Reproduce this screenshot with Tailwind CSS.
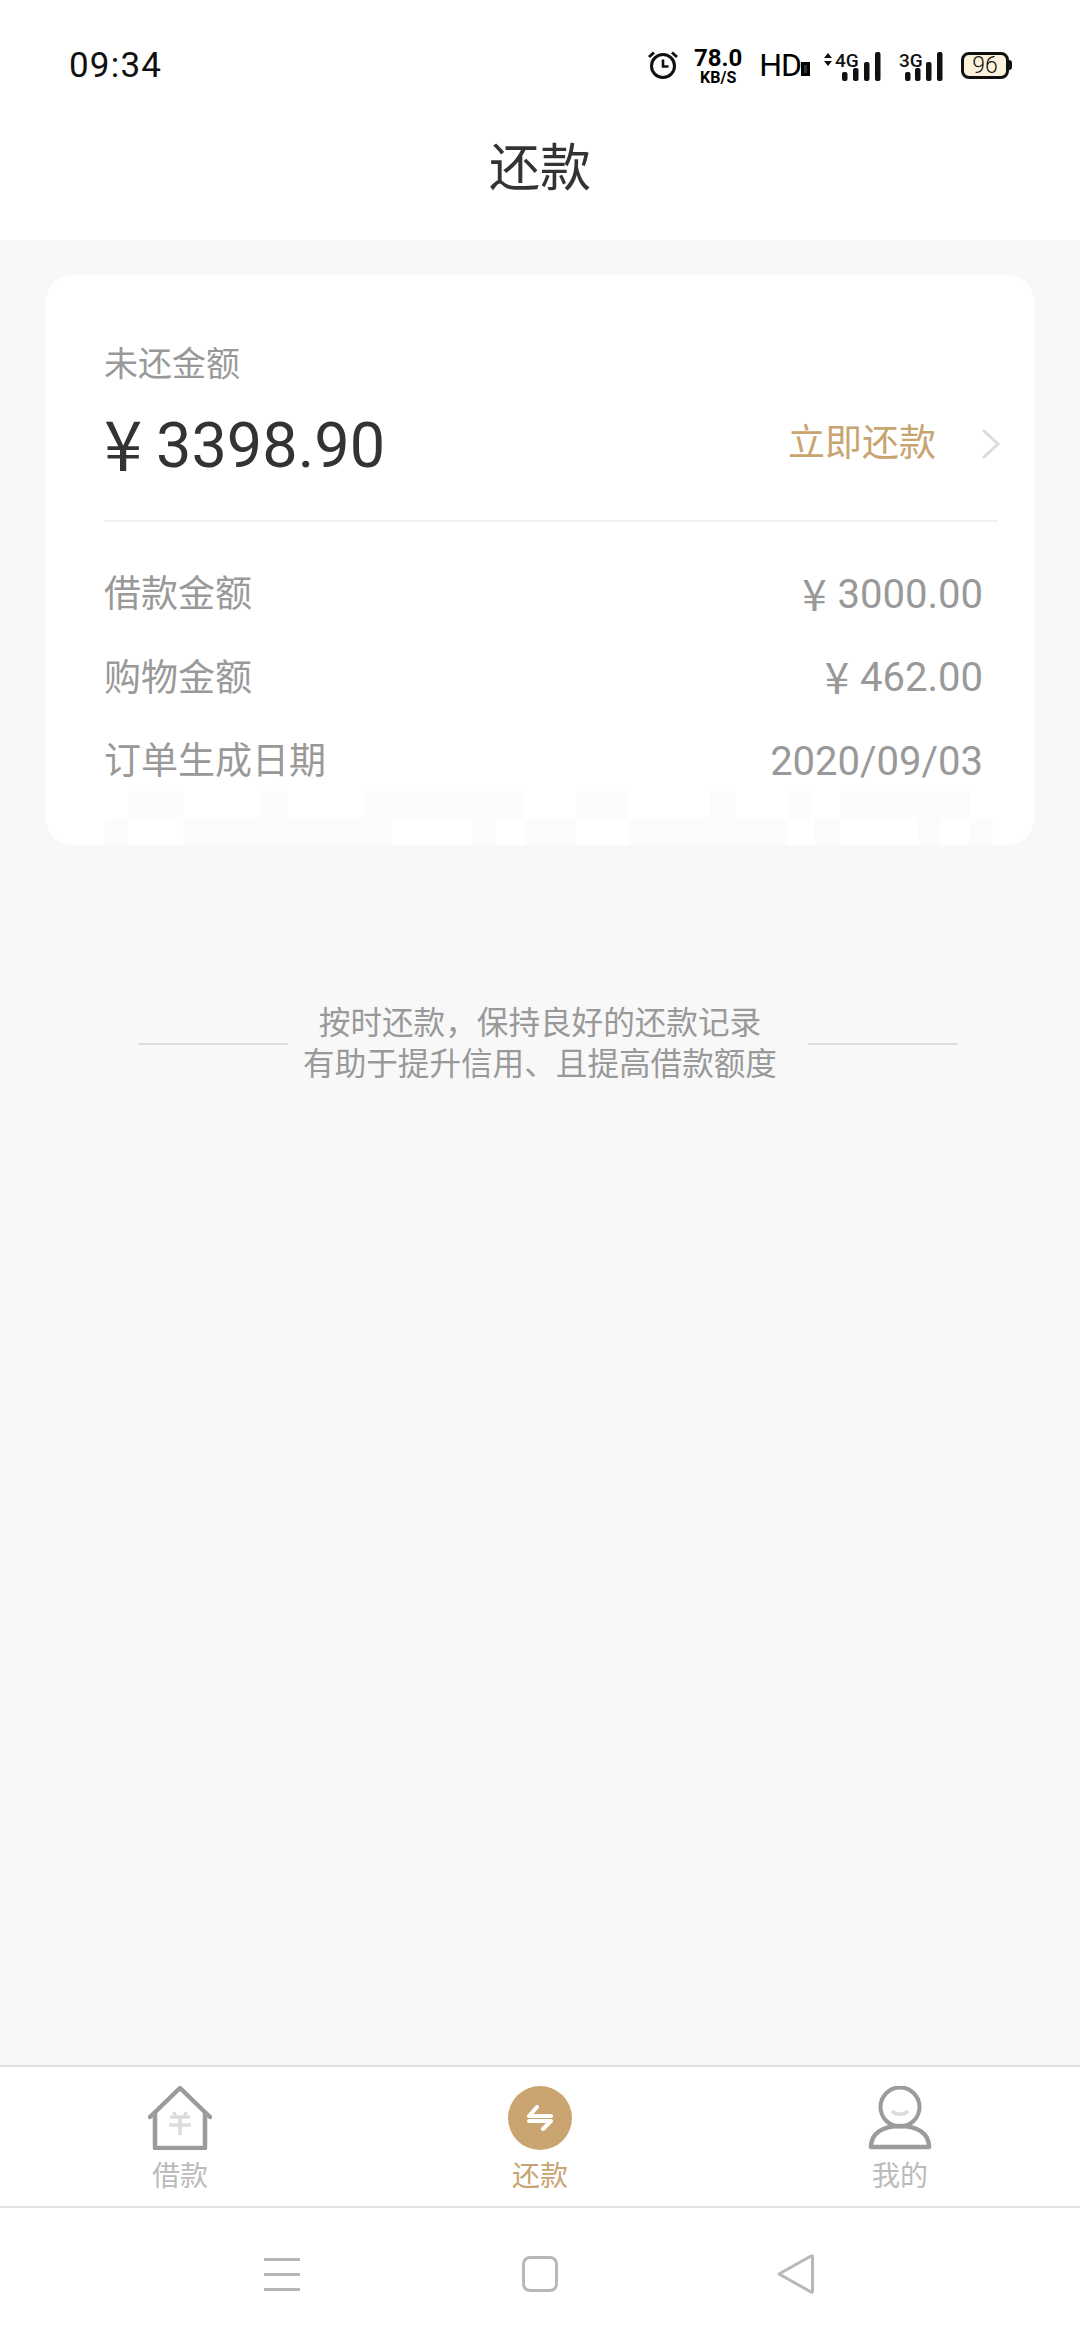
<!doctype html>
<html>
<head>
  <meta charset="UTF-8">
  <meta name="viewport" content="width=device-width, initial-scale=1.0">
  <script src="https://cdn.jsdelivr.net/npm/@tailwindcss/browser@4"></script>
</head>
<body class="font-['Roboto','Noto_Sans_CJK_SC',sans-serif]">
  <div class="w-[1080px] h-[2340px] flex flex-col bg-[#f8f8f8] overflow-hidden">

    <!-- Status bar + title -->
    <header class="h-[240px] shrink-0 bg-white flex flex-col">
      <div class="h-[130px] shrink-0">
        <div class="flex items-center h-[26px] mt-[52px] pl-[69px] pr-[68px] justify-between">
          <span class="text-[35px] leading-none text-[#111] tracking-[1.200px]">09:34</span>
          <div class="flex items-center h-[30px]">
            <svg class="w-[32px] h-[30px]" viewBox="0 0 32 30" fill="none" stroke="#111" stroke-width="3">
              <circle cx="16" cy="16" r="11.5"/>
              <path d="M16 9.500v7h5.500" stroke-width="2.600"/>
              <path d="M2 7l5-4.500M30 7l-5-4.500" stroke-width="3"/>
            </svg>
            <div class="w-[50px] ml-[14px] mt-[4px] flex flex-col items-center font-bold text-black">
              <span class="text-[24px] leading-[20px]">78.0</span>
              <span class="text-[16px] leading-[19px]">KB/S</span>
            </div>
            <div class="ml-[16px] flex items-end text-[32px] leading-[30px] text-black">
              <span class="tracking-[-1px]">HD</span>
              <span class="w-[9px] h-[14px] border-[3px] border-black bg-black/80 mb-[4px]"></span>
            </div>
            <svg class="w-[58px] h-[32px] ml-[14px]" viewBox="0 0 58 32" fill="#111">
              <path d="M0 9l4-5 4 5zM0 12l4 5 4-5z"/>
              <text x="11" y="18" font-size="19" font-weight="500" font-family="Roboto">4G</text>
              <rect x="18" y="23" width="5.500" height="9" rx="2"/>
              <rect x="29" y="19" width="5.500" height="13" rx="2"/>
              <rect x="40" y="13" width="5.500" height="19" rx="2"/>
              <rect x="51" y="3" width="5.500" height="29" rx="2"/>
            </svg>
            <svg class="w-[46px] h-[32px] ml-[17px]" viewBox="0 0 46 32" fill="#111">
              <text x="0" y="18" font-size="19" font-weight="500" font-family="Roboto">3G</text>
              <rect x="6" y="23" width="5.500" height="9" rx="2"/>
              <rect x="16" y="19" width="5.500" height="13" rx="2"/>
              <rect x="27" y="13" width="5.500" height="19" rx="2"/>
              <rect x="38" y="3" width="5.500" height="29" rx="2"/>
            </svg>
            <div class="ml-[16px] flex items-center">
              <div class="w-[48px] h-[27px] rounded-[8px] border-[3px] border-[#111] bg-[#fdf3dc] flex items-center justify-center text-[23px] font-light text-[#111] leading-none">96</div>
              <div class="w-[3px] h-[10px] bg-[#111] rounded-r-sm"></div>
            </div>
          </div>
        </div>
      </div>
      <h1 class="text-[51px] leading-[74px] mt-[2px] text-[#333] text-center">还款</h1>
    </header>

    <main class="flex-1 px-[46px] pt-[35px]">
      <!-- Card -->
      <section class="relative h-[570px] w-[988px] bg-white rounded-[26px] pt-[68px] overflow-hidden">
        <div class="pl-[58px] text-[34px] leading-[42px] text-[#999]">未还金额</div>
        <div class="flex items-center h-[72px] mt-[24px] pl-[58px]">
          <span class="text-[64px] leading-none text-[#333] flex items-center"><span class="w-[52px] text-[69px] mt-[-8px] font-['Noto_Sans_CJK_SC']">¥</span><span class="text-[63px]">3398.90</span></span>
          <span class="ml-auto text-[37px] leading-none text-[#c8a471] mb-[4px]">立即还款</span>
          <svg class="w-[20px] h-[32px] ml-[45px] mr-[33px] mb-[2px]" viewBox="0 0 20 32" fill="none" stroke="#dcdcdc" stroke-width="3"><path d="M2 2l15 14L2 30"/></svg>
        </div>
        <div class="ml-[58px] mt-[39px] mr-[36px] h-[2px] bg-[#f0f0f0]"></div>
        <div class="flex flex-col pl-[58px] pr-[51px] mt-[31px] text-[#999]">
          <div class="flex items-center justify-between h-[83.500px]"><span class="text-[37px]">借款金额</span><span class="text-[40px] leading-none flex items-center"><span class="text-[44px] mr-[11px] mt-[-6px] font-['Noto_Sans_CJK_SC']">¥</span>3000.00</span></div>
          <div class="flex items-center justify-between h-[83.500px]"><span class="text-[37px]">购物金额</span><span class="text-[40px] leading-none flex items-center"><span class="text-[44px] mr-[11px] mt-[-6px] font-['Noto_Sans_CJK_SC']">¥</span>462.00</span></div>
          <div class="flex items-center justify-between h-[83.500px]"><span class="text-[37px]">订单生成日期</span><span class="text-[40px] leading-none">2020/09/03</span></div>
        </div>
        <!-- faint mosaic left at the bottom of the card -->
        <div class="absolute left-[59px] bottom-0 flex flex-col">
          <div class="flex h-[27px] ml-[23px]">
            <div class="w-[55px] bg-[#fcfcfc]"></div>
            <div class="w-[26px] ml-[78px] bg-[#fcfcfc]"></div>
            <div class="w-[159px] ml-[78px] bg-[#fcfcfc]"></div>
            <div class="w-[53px] ml-[52px] bg-[#fcfcfc]"></div>
            <div class="w-[26px] ml-[81px] bg-[#fcfcfc]"></div>
            <div class="w-[23px] ml-[52px] bg-[#fcfcfc]"></div>
            <div class="w-[130px] ml-[29px] bg-[#fcfcfc]"></div>
          </div>
          <div class="flex h-[27px]">
            <div class="w-[23px] bg-[#fcfcfc]"></div>
            <div class="w-[208px] ml-[55px] bg-[#fcfcfc]"></div>
            <div class="w-[23px] ml-[81px] bg-[#fcfcfc]"></div>
            <div class="w-[52px] ml-[29px] bg-[#fcfcfc]"></div>
            <div class="w-[159px] ml-[53px] bg-[#fcfcfc]"></div>
            <div class="w-[26px] ml-[26px] bg-[#fcfcfc]"></div>
            <div class="w-[23px] ml-[78px] bg-[#fcfcfc]"></div>
            <div class="w-[23px] ml-[29px] bg-[#fcfcfc]"></div>
          </div>
        </div>
      </section>

      <!-- Hint -->
      <div class="flex items-center mt-[158px] ml-[92px] w-[820px]">
        <div class="w-[150px] h-[2px] bg-[#dedede]"></div>
        <p class="w-[520px] pr-[16px] text-center text-[31.600px] leading-[41px] text-[#999]">按时还款，保持良好的还款记录<br>有助于提升信用、且提高借款额度</p>
        <div class="w-[150px] h-[2px] bg-[#dedede]"></div>
      </div>
    </main>

    <!-- Tab bar -->
    <nav class="h-[143px] shrink-0 bg-white border-t-2 border-b-2 border-[#e2e2e2] box-border grid grid-cols-3 pt-[19px]">
      <div class="flex flex-col items-center">
        <svg class="w-[64px] h-[64px]" viewBox="0 0 64 64" fill="none">
          <path d="M2 31L32 2l30 29" stroke="#9b9b9b" stroke-width="4.500" stroke-linecap="round" stroke-linejoin="round"/>
          <path d="M7 27v35h50V27" stroke="#9b9b9b" stroke-width="4.500" stroke-linejoin="round"/>
          <path d="M26 26l1.500 5M38 26l-1.500 5M22 31h20M21 39h22M32 31v18" stroke="#dcdcdc" stroke-width="3.500"/>
        </svg>
        <span class="text-[28px] leading-[40px] mt-[7px] text-[#bbb]">借款</span>
      </div>
      <div class="flex flex-col items-center">
        <div class="w-[64px] h-[64px] rounded-full bg-[#cba571] flex items-center justify-center">
          <svg class="w-[26px] h-[26px]" viewBox="0 0 26 26" fill="none" stroke="#fff" stroke-width="4" stroke-linecap="round" stroke-linejoin="round">
            <path d="M2 11h22M2 11l8-9M24 16H2M24 16l-8 8"/>
          </svg>
        </div>
        <span class="text-[28px] leading-[40px] mt-[7px] text-[#c8a471]">还款</span>
      </div>
      <div class="flex flex-col items-center">
        <svg class="w-[64px] h-[64px]" viewBox="0 0 64 64" fill="none">
          <circle cx="32" cy="21" r="19.500" stroke="#9b9b9b" stroke-width="4"/>
          <path d="M3 61c0-14 12-21 29-21s29 7 29 21z" stroke="#9b9b9b" stroke-width="4.500" stroke-linejoin="round"/>
          <path d="M25 26c4 3 10 3 14 0" stroke="#dcdcdc" stroke-width="3.500" stroke-linecap="round"/>
        </svg>
        <span class="text-[28px] leading-[40px] mt-[7px] text-[#bbb]">我的</span>
      </div>
    </nav>

    <!-- System nav -->
    <div class="h-[132px] shrink-0 bg-white grid grid-cols-3 items-center">
      <div class="flex">
        <div class="w-[36px] flex flex-col gap-[12px] ml-[264px]">
          <div class="h-[3px] bg-[#b5b5b5]"></div>
          <div class="h-[3px] bg-[#b5b5b5]"></div>
          <div class="h-[3px] bg-[#b5b5b5]"></div>
        </div>
      </div>
      <div class="flex justify-center">
        <div class="w-[36px] h-[36px] rounded-[8px] border-[3px] border-[#b8b8b8]"></div>
      </div>
      <div class="flex">
        <svg class="w-[40px] h-[42px] ml-[56px]" viewBox="0 0 40 42" fill="none">
          <path d="M3 21L35 3q1.500-1 1.500 1v34q0 2-1.500 1z" stroke="#b8b8b8" stroke-width="3" stroke-linejoin="round"/>
        </svg>
      </div>
    </div>
  </div>
</body>
</html>
